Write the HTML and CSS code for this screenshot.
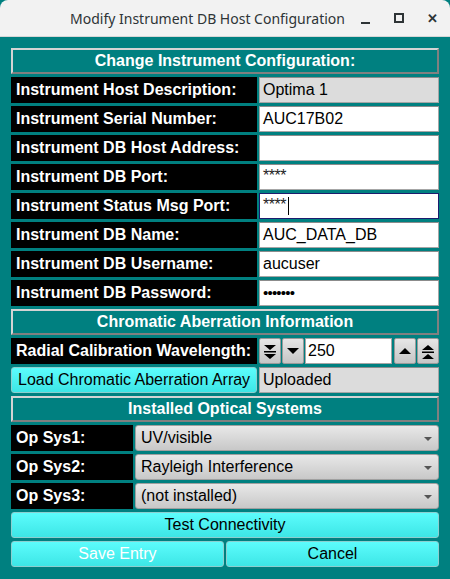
FILE: index.html
```html
<!DOCTYPE html>
<html lang="en">
<head>
  <meta charset="UTF-8" />
  <title>Modify Instrument DB Host Configuration</title>
  <link rel="stylesheet" href="styles.css">
</head>
<body>
  <div class="titlebar">
    <span class="title">Modify Instrument DB Host Configuration</span>
    <span class="wbtn min"></span>
    <span class="wbtn max"></span>
    <span class="wbtn close">&#x2715;</span>
  </div>

  <div class="dialog">
    <div class="banner">Change Instrument Configuration:</div>

    <div class="row">
      <div class="label">Instrument Host Description:</div>
      <div class="field readonly">Optima 1</div>
    </div>
    <div class="row">
      <div class="label">Instrument Serial Number:</div>
      <div class="field">AUC17B02</div>
    </div>
    <div class="row">
      <div class="label">Instrument DB Host Address:</div>
      <div class="field"></div>
    </div>
    <div class="row">
      <div class="label">Instrument DB Port:</div>
      <div class="field stars">****</div>
    </div>
    <div class="row">
      <div class="label">Instrument Status Msg Port:</div>
      <div class="field stars focus">****<span class="caret"></span></div>
    </div>
    <div class="row">
      <div class="label">Instrument DB Name:</div>
      <div class="field">AUC_DATA_DB</div>
    </div>
    <div class="row">
      <div class="label">Instrument DB Username:</div>
      <div class="field">aucuser</div>
    </div>
    <div class="row">
      <div class="label">Instrument DB Password:</div>
      <div class="field dots">&#x2022;&#x2022;&#x2022;&#x2022;&#x2022;&#x2022;&#x2022;</div>
    </div>

    <div class="banner">Chromatic Aberration Information</div>

    <div class="row">
      <div class="label">Radial Calibration Wavelength:</div>
      <div class="spin">
        <span class="sbtn">
          <svg width="14" height="16" viewBox="0 0 14 16"><path d="M1 2h12l-6 5z M1 8h12v1.5H1z M1 11h12l-6 5z" fill="#000"/></svg>
        </span>
        <span class="sbtn">
          <svg width="12" height="8" viewBox="0 0 12 8"><path d="M0 1h12l-6 6z" fill="#000"/></svg>
        </span>
        <span class="spin-value">250</span>
        <span class="sbtn">
          <svg width="12" height="8" viewBox="0 0 12 8"><path d="M0 7h12l-6-6z" fill="#000"/></svg>
        </span>
        <span class="sbtn">
          <svg width="14" height="16" viewBox="0 0 14 16"><path d="M1 7h12l-6-5z M1 8.5h12V10H1z M1 16h12l-6-5z" fill="#000"/></svg>
        </span>
      </div>
    </div>
    <div class="row">
      <div class="button">Load Chromatic Aberration Array</div>
      <div class="field readonly">Uploaded</div>
    </div>

    <div class="banner">Installed Optical Systems</div>

    <div class="row opsys">
      <div class="label">Op Sys1:</div>
      <div class="combo">UV/visible</div>
    </div>
    <div class="row opsys">
      <div class="label">Op Sys2:</div>
      <div class="combo">Rayleigh Interference</div>
    </div>
    <div class="row opsys">
      <div class="label">Op Sys3:</div>
      <div class="combo">(not installed)</div>
    </div>

    <div class="button center">Test Connectivity</div>

    <div class="row halves">
      <div class="button center disabled">Save Entry</div>
      <div class="button center">Cancel</div>
    </div>
  </div>
</body>
</html>
```

FILE: styles.css
```css
body {
  margin: 0;
  width: 450px;
  height: 579px;
  overflow: hidden;
  background: #008080;
  font-family: "Liberation Sans", Arial, sans-serif;
}
.titlebar {
  height: 36px;
  background: #f2f2f2;
  border-bottom: 1px solid #d6d6d6;
  border-radius: 8px 8px 0 0;
  display: flex;
  align-items: center;
  font-family: "Noto Sans", sans-serif;
  color: #2e3436;
}
.title {
  margin-left: 70px;
  font-size: 14px;
  white-space: nowrap;
  width: 283px;
}
.wbtn {
  width: 35px;
  height: 20px;
  display: flex;
  align-items: center;
  justify-content: center;
}
.min::after {
  content: "";
  width: 9px;
  height: 2px;
  background: #2e3436;
  margin-top: 10px;
}
.max::after {
  content: "";
  width: 6px;
  height: 6px;
  border: 2px solid #2e3436;
}
.close {
  font-size: 13px;
  font-weight: bold;
  margin-left: -1px;
}
.dialog {
  padding: 11px 11px 0 11px;
  display: flex;
  flex-direction: column;
  gap: 3px;
}
.banner {
  height: 22px;
  border: 2px solid;
  border-color: #d4d4d4 #808080 #808080 #d4d4d4;
  color: #fff;
  font-weight: bold;
  font-size: 16px;
  text-align: center;
  line-height: 22px;
}
.row {
  display: grid;
  grid-template-columns: 246px 180px;
  gap: 2px;
  height: 26px;
}
.row.opsys {
  grid-template-columns: 122px 304px;
}
.row.halves {
  grid-template-columns: 213px 213px;
}
.label {
  background: #000;
  color: #fff;
  font-weight: bold;
  font-size: 16px;
  line-height: 26px;
  padding-left: 5px;
  white-space: nowrap;
  overflow: hidden;
}
.field {
  background: #fff;
  border: 1px solid #a6a6a6;
  border-top-color: #8c8c8c;
  box-sizing: border-box;
  font-size: 16px;
  line-height: 24px;
  padding-left: 3px;
  color: #000;
}
.field.readonly {
  background: #dcdcdc;
}
.field.focus {
  border-color: #1c1c6e;
}
.field.stars {
  font-size: 16px;
  letter-spacing: -0.5px;
  line-height: 22px;
  color: #222;
}
.field.dots {
  font-size: 15px;
  letter-spacing: -0.8px;
}
.caret {
  display: inline-block;
  width: 1px;
  height: 18px;
  background: #000;
  vertical-align: -5px;
  margin-left: 2px;
}
.spin {
  display: flex;
  gap: 1px;
}
.sbtn {
  width: 22px;
  box-sizing: border-box;
  border: 1px solid #9a9a9a;
  border-radius: 2px;
  background: linear-gradient(#e6e6e6, #c6c6c6);
  display: flex;
  align-items: center;
  justify-content: center;
}
.spin-value {
  flex: 1;
  background: #fff;
  border: 1px solid #a6a6a6;
  font-size: 16px;
  line-height: 24px;
  padding-left: 2px;
  margin-right: 1px;
}
.button {
  height: 26px;
  box-sizing: border-box;
  border: 1px solid #8ccfcf;
  border-radius: 3px;
  background: linear-gradient(#5cfcfc, #3de6e6);
  color: #000;
  font-size: 16px;
  line-height: 24px;
  padding-left: 6px;
  white-space: nowrap;
  overflow: hidden;
}
.button.center {
  text-align: center;
  padding-left: 0;
}
.button.disabled {
  color: #fff;
}
.combo {
  position: relative;
  box-sizing: border-box;
  border: 1px solid #a0a0a0;
  border-radius: 3px;
  background: linear-gradient(#e8e8e8, #c8c8c8);
  font-size: 16px;
  line-height: 24px;
  padding-left: 5px;
  color: #000;
}
.combo::after {
  content: "";
  position: absolute;
  right: 6px;
  top: 11px;
  border-left: 4px solid transparent;
  border-right: 4px solid transparent;
  border-top: 4px solid #555;
}
```
